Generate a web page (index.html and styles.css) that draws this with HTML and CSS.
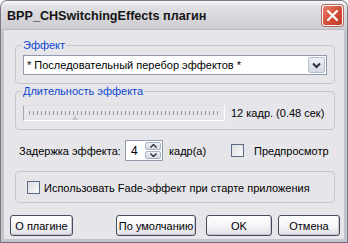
FILE: index.html
```html
<!DOCTYPE html>
<html lang="ru">
<head>
    <meta charset="UTF-8">
    <title>BPP_CHSwitchingEffects плагин</title>
    <link rel="stylesheet" href="styles.css">
</head>
<body>
    <div class="window">
        <div class="titlebar">
            <span class="title">BPP_CHSwitchingEffects плагин</span>
            <span class="close">
                <svg width="13" height="13" viewBox="0 0 13 13"><path d="M2 2 L11 11 M11 2 L2 11" stroke="#fff" stroke-width="2.2" stroke-linecap="round"/></svg>
            </span>
        </div>

        <div class="dialog">
            <fieldset class="group">
                <legend>Эффект</legend>
                <div class="combo">
                    <span class="combo-text">* Последовательный перебор эффектов *</span>
                    <span class="combo-btn">
                        <svg width="9" height="7" viewBox="0 0 9 7"><path d="M1 1.5 L4.5 5 L8 1.5" fill="none" stroke="#2b2b3b" stroke-width="2"/></svg>
                    </span>
                </div>
            </fieldset>

            <fieldset class="group">
                <legend>Длительность эффекта</legend>
                <div class="slider-row">
                    <div class="slider">
                        <div class="ticks"></div>
                        <div class="thumb"></div>
                    </div>
                    <span class="slider-value">12 кадр. (0.48 сек)</span>
                </div>
            </fieldset>

            <div class="delay-row">
                <span class="delay-label">Задержка эффекта:</span>
                <div class="spin">
                    <span class="spin-value">4</span>
                    <span class="spin-btns">
                        <span class="spin-btn"><svg width="7" height="4" viewBox="0 0 7 4"><path d="M0.5 3.5 L3.5 0.5 L6.5 3.5" fill="none" stroke="#2b2b3b" stroke-width="1.4"/></svg></span>
                        <span class="spin-btn"><svg width="7" height="4" viewBox="0 0 7 4"><path d="M0.5 0.5 L3.5 3.5 L6.5 0.5" fill="none" stroke="#2b2b3b" stroke-width="1.4"/></svg></span>
                    </span>
                </div>
                <span class="unit">кадр(а)</span>
                <label class="check preview"><span class="box"></span>Предпросмотр</label>
            </div>

            <div class="group plain">
                <label class="check"><span class="box"></span>Использовать Fade-эффект при старте приложения</label>
            </div>

            <div class="buttons">
                <span class="btn about">О плагине</span>
                <span class="btn defaults">По умолчанию</span>
                <span class="btn ok">OK</span>
                <span class="btn cancel">Отмена</span>
            </div>
        </div>
    </div>
</body>
</html>
```

FILE: styles.css
```css
body {
    margin: 0;
    padding: 0;
    background-color: #fff;
    font-family: "Liberation Sans", Arial, sans-serif;
    font-size: 11px;
    color: #000;
}
.window {
    width: 348px;
    height: 243px;
    box-sizing: border-box;
    display: flex;
    flex-direction: column;
    background: #c3c3cb;
    border: 1px solid #7a7a84;
    border-bottom-color: #6c6c76;
    border-radius: 7px 7px 0 0;
}
.titlebar {
    height: 28px;
    display: flex;
    align-items: center;
    justify-content: space-between;
    padding: 0 4px 0 6px;
    background: linear-gradient(#f7f7f9 0%, #e2e2e6 18%, #d6d6da 60%, #cdcdd2 100%);
    border-radius: 6px 6px 0 0;
}
.title {
    font-weight: bold;
    font-size: 12.6px;
    color: #151515;
    padding-top: 1px;
}
.close {
    width: 19px;
    height: 19px;
    border: 1px solid #fff;
    border-radius: 3px;
    display: flex;
    align-items: center;
    justify-content: center;
    background: linear-gradient(135deg, #e88672 0%, #d6533c 45%, #bf3a25 100%);
    box-shadow: 0 0 0 1px #b46a5e;
    margin-top: 1px;
}
.dialog {
    flex: 1;
    margin: 0 3px 3px 3px;
    padding: 9px 4px 0 6px;
    background: #e6e6ea;
    border-top: 1px solid #b8b8c0;
    display: flex;
    flex-direction: column;
}
.group {
    margin: 0 5px;
    padding: 3px 7px 8px 7px;
    border: 1px solid #c6c6cc;
    border-radius: 4px;
    min-width: 0;
}
.group legend {
    color: #0c46cf;
    padding: 0 1px;
    margin-left: -1px;
    line-height: 13px;
}
.group + .group {
    margin-top: 1px;
}
.combo {
    height: 20px;
    box-sizing: border-box;
    display: flex;
    align-items: center;
    justify-content: space-between;
    background: #fff;
    border: 1px solid #8f9bad;
    padding: 1px 1px 1px 3px;
}
.combo-btn {
    width: 17px;
    height: 16px;
    box-sizing: border-box;
    display: flex;
    align-items: center;
    justify-content: center;
    background: linear-gradient(#eef0f5, #d3d8e2);
    border: 1px solid #b7bfcc;
    border-radius: 2px;
}
.slider-row {
    display: flex;
    align-items: center;
    gap: 6px;
    padding-top: 4px;
}
.slider {
    position: relative;
    width: 202px;
    height: 16px;
    box-sizing: border-box;
    border-left: 1px solid #a9a9b0;
    border-top: 1px solid #e0e0e4;
    border-right: 1px solid #fff;
    border-bottom: 1px solid #fff;
}
.ticks {
    margin: 5px 3px 0 5px;
    height: 4px;
    background: repeating-linear-gradient(90deg, #9a9aa2 0, #9a9aa2 1px, transparent 1px, transparent 4px);
}
.thumb {
    position: absolute;
    left: 48px;
    top: 9px;
    width: 0;
    height: 0;
    border-left: 3px solid transparent;
    border-right: 3px solid transparent;
    border-bottom: 5px solid #c4c4ca;
}
.delay-row {
    display: flex;
    align-items: center;
    white-space: nowrap;
    padding: 10px 0 10px 9px;
}
.delay-label {
    width: 100px;
    flex-shrink: 0;
}
.spin {
    display: flex;
    flex-shrink: 0;
    height: 21px;
    width: 38px;
    box-sizing: border-box;
    margin-left: 6px;
    background: #fff;
    border: 1px solid #8f9bad;
    padding: 1px;
}
.spin-value {
    flex: 1;
    padding: 2px 0 0 4px;
    font-size: 12px;
}
.spin-btns {
    display: flex;
    flex-direction: column;
    gap: 1px;
    width: 16px;
}
.spin-btn {
    flex: 1;
    display: flex;
    align-items: center;
    justify-content: center;
    background: linear-gradient(#eef0f5, #d3d8e2);
    border: 1px solid #a9b2c2;
    border-radius: 2px;
}
.unit {
    width: 62px;
    margin-left: 6px;
    flex-shrink: 0;
}
.check {
    display: flex;
    align-items: center;
    white-space: nowrap;
}
.box {
    width: 11px;
    height: 11px;
    flex-shrink: 0;
    border: 1px solid #5b6b84;
    background: linear-gradient(135deg, #dcdce2, #fafafa);
    margin-right: 4px;
}
.preview .box {
    margin-right: 10px;
}
.plain {
    margin-top: 0;
    padding: 9px 11px 8px 11px;
}
.buttons {
    display: flex;
    margin-top: 12px;
    gap: 6px;
}
.btn {
    height: 21px;
    box-sizing: border-box;
    display: flex;
    align-items: center;
    justify-content: center;
    border: 1px solid #474b5e;
    border-radius: 3px;
    background: linear-gradient(#ffffff 0%, #f3f3f6 60%, #dcdce3 100%);
    box-shadow: inset -1px -1px 0 #c6c6d0;
}
.about {
    width: 63px;
    margin-right: auto;
}
.defaults {
    width: 80px;
    margin-right: 4px;
}
.ok {
    width: 66px;
}
.cancel {
    width: 62px;
}
```
